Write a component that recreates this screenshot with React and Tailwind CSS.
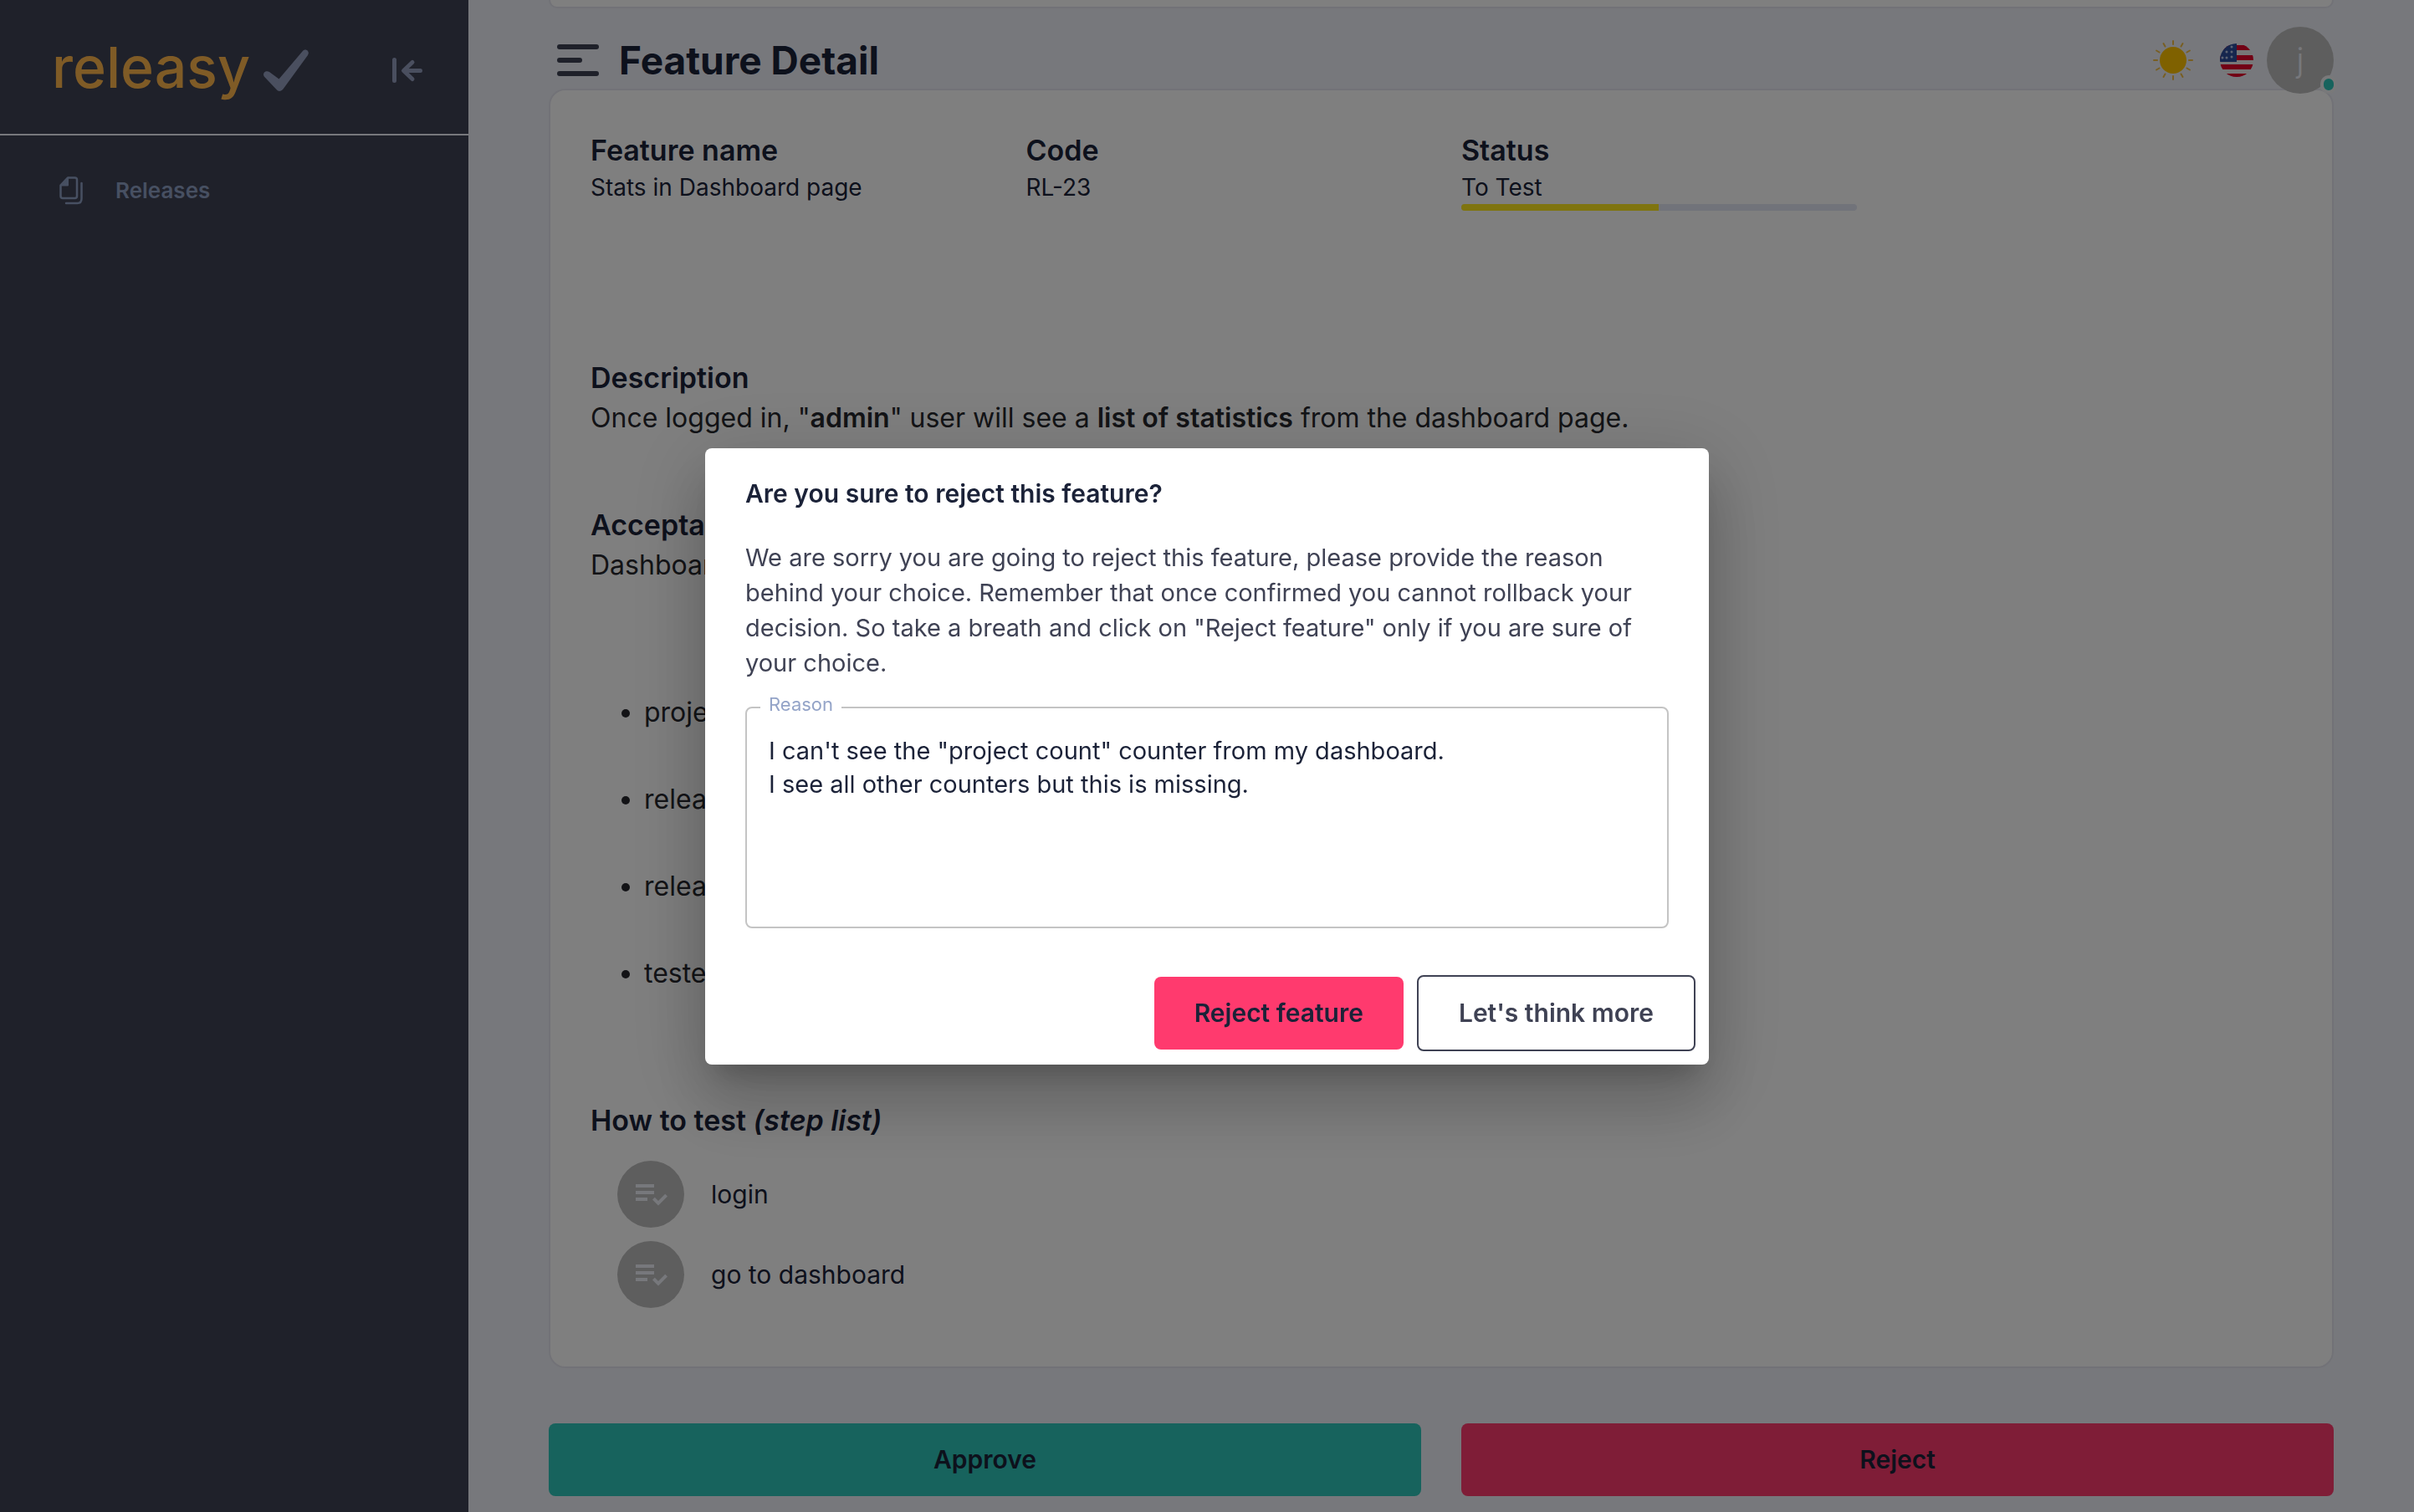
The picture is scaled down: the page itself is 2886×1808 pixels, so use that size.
import React from "react";

const CRITERIA = ["projects count", "releases count", "released features", "tested features"];
const STEPS = ["login", "go to dashboard"];

function LogoCheck() {
  return (
    <svg viewBox="0 0 54 50" className="mt-2 h-[50px] w-[54px] fill-[#949fbf]" aria-hidden="true">
      <path d="M7 27 L18.5 35.500 L46.500 2.500 C48.500 -.2 51.500 0 53 2 C54.200 3.600 54 5.300 53 7 L23.500 47.500 C21 50.600 17.500 50.600 15.500 48 L1.500 33.300 C-.5 31.300 -.3 29 1 27.600 C2.500 25.900 5 25.700 7 27 Z" />
    </svg>
  );
}

function CollapseIcon() {
  return (
    <svg viewBox="0 0 36 30" className="h-[30px] w-9 stroke-[#949fbf]" fill="none" strokeWidth="5" strokeLinecap="round" strokeLinejoin="round" aria-hidden="true">
      <path d="M2.500 2.500V27.500M33.500 15.500H14M24 5.500L13.500 15.500L24 25.500" />
    </svg>
  );
}

function ReleasesIcon() {
  return (
    <svg viewBox="0 0 30 34" className="h-[34px] w-[30px]" fill="none" stroke="#8fa0c4" strokeWidth="2.500" strokeLinecap="round" strokeLinejoin="round" aria-hidden="true">
      <path d="M10 1.500H18.500Q21 1.500 21 4V23.500Q21 26 18.500 26H4Q1.500 26 1.500 23.500V10.500Z" />
      <path d="M10.500 2V11H2Z" fill="#8fa0c4" strokeWidth="1" />
      <path d="M26.500 8V26.500Q26.500 32 21.500 32H8" />
    </svg>
  );
}

function MenuIcon() {
  return (
    <svg viewBox="0 0 50 38" className="h-[38px] w-[50px] fill-[#3f4254]" aria-hidden="true">
      <rect width="50" height="6" rx="3" />
      <rect y="16" width="30" height="6" rx="3" />
      <rect y="32" width="50" height="6" rx="3" />
    </svg>
  );
}

function SunIcon() {
  return (
    <svg viewBox="0 0 48 48" className="size-12" aria-hidden="true">
      <circle cx="24" cy="24" r="16" fill="#ffc200" />
      {[0, 30, 60, 90, 120, 150, 180, 210, 240, 270, 300, 330].map((a) => (
        <rect key={a} x="23" y="0" width="2" height="6" rx="1" fill="#f0bd45" transform={`rotate(${a} 24 24)`} />
      ))}
    </svg>
  );
}

function FlagIcon() {
  return (
    <svg viewBox="0 0 40 40" className="size-10" aria-hidden="true">
      <defs>
        <clipPath id="flag">
          <circle cx="20" cy="20" r="20" />
        </clipPath>
      </defs>
      <g clipPath="url(#flag)">
        <rect width="40" height="40" fill="#eeeeee" />
        {[2, 14, 25, 36].map((y) => (
          <rect key={y} y={y} width="40" height="6" fill="#e4002b" />
        ))}
        <rect width="20" height="22" fill="#2c4c9c" />
        {[[14, 4], [14, 10], [14, 16], [8, 10], [8, 17], [3, 17]].map(([x, y]) => (
          <circle key={`${x}-${y}`} cx={x} cy={y} r="1.500" fill="#b9c5e4" />
        ))}
      </g>
    </svg>
  );
}

function StepIcon() {
  return (
    <span className="flex size-20 items-center justify-center rounded-full bg-[#bdbdbd]">
      <svg viewBox="0 0 24 24" className="size-12 fill-[#eef0f8]" aria-hidden="true">
        <path d="M3 6h11v2H3zM3 10h11v2H3zM3 14h7v2H3zM13 15.300l3.500 3.500 5.500-5.500-1.400-1.400-4.100 4.100-2.100-2.100z" />
      </svg>
    </span>
  );
}

function SectionTitle({ children }) {
  return <h2 className="text-[34px] leading-[48px] font-semibold text-[#1b2238]">{children}</h2>;
}

export default function App() {
  return (
    <div className="flex min-h-screen bg-[#eef0f8] font-['Inter',sans-serif] text-[#1b2238]">
      <aside className="w-[560px] shrink-0 bg-[#3f4254]">
        <div className="flex h-[162px] items-center border-b-2 border-[#eef0f8] pr-[55px] pl-[62px]">
          <a href="#home" className="flex items-center gap-4">
            <span className="text-[68px] leading-[80px] font-medium text-[#ffb74d]">releasy</span>
            <LogoCheck />
          </a>
          <button type="button" aria-label="Collapse sidebar" className="mt-2 ml-auto">
            <CollapseIcon />
          </button>
        </div>
        <nav className="px-[71px] pt-[46px]">
          <a href="#releases" className="flex items-center gap-[37px] text-[26px] leading-10 font-semibold text-[#8fa0c4]">
            <ReleasesIcon />
            Releases
          </a>
        </nav>
      </aside>

      <main className="min-w-0 grow px-24 pb-5">
        <div className="h-[10px] rounded-b-[20px] border-2 border-t-0 border-[#e4e5ef] bg-white" />

        <header className="relative z-10 flex h-24 items-center pt-7 pl-[10px]">
          <button type="button" aria-label="Toggle menu">
            <MenuIcon />
          </button>
          <h1 className="ml-6 text-[46px] leading-[56px] font-bold">Feature Detail</h1>
          <div className="ml-auto flex items-center">
            <button type="button" aria-label="Switch theme">
              <SunIcon />
            </button>
            <button type="button" aria-label="Change language" className="ml-8">
              <FlagIcon />
            </button>
            <button type="button" className="relative ml-4 flex size-20 items-center justify-center rounded-full bg-[#bdbdbd] text-[40px] font-light text-[#eef0f8]">
              j
              <span className="absolute -right-1 bottom-0 h-[22px] w-5 rounded-full border-4 border-[#f2f2f4] bg-[#2ec6ba]" />
            </button>
          </div>
        </header>

        <article className="rounded-[20px] border-2 border-[#e4e5ef] bg-white px-12 pt-12 pb-[70px]">
          <div className="grid grid-cols-4 gap-12">
            <div>
              <SectionTitle>Feature name</SectionTitle>
              <p className="text-[28px] leading-10">Stats in Dashboard page</p>
            </div>
            <div>
              <SectionTitle>Code</SectionTitle>
              <p className="text-[28px] leading-10">RL-23</p>
            </div>
            <div>
              <SectionTitle>Status</SectionTitle>
              <p className="text-[28px] leading-10">To Test</p>
              <div className="h-2 overflow-hidden rounded-sm bg-[#e2e6f4]">
                <div className="h-full w-1/2 bg-[#ffe81e]" />
              </div>
            </div>
          </div>

          <section className="mt-44">
            <SectionTitle>Description</SectionTitle>
            <p className="text-[32px] leading-[48px] text-[#26272d]">
              Once logged in, "<strong className="font-semibold">admin</strong>" user will see a{" "}
              <strong className="font-semibold">list of statistics</strong> from the dashboard page.
            </p>
          </section>

          <section className="mt-20">
            <SectionTitle>Acceptance criteria</SectionTitle>
            <div className="text-[32px] leading-[48px] text-[#26272d]">
              <p>Dashboard page shows</p>
              <ul className="mt-32 list-disc space-y-14 pl-16">
                {CRITERIA.map((item) => (
                  <li key={item}>{item}</li>
                ))}
              </ul>
            </div>
          </section>

          <section className="mt-32">
            <SectionTitle>
              How to test <em>(step list)</em>
            </SectionTitle>
            <ol className="mt-6 space-y-4 pl-8">
              {STEPS.map((step) => (
                <li key={step} className="flex items-center gap-8 text-[30px] leading-[42px]">
                  <StepIcon />
                  {step}
                </li>
              ))}
            </ol>
          </section>
        </article>

        <div className="mt-[66px] grid grid-cols-2 gap-12 text-[30px] leading-[39px] font-semibold">
          <button type="button" className="rounded-lg bg-[#2ec6ba] py-6">Approve</button>
          <button type="button" className="rounded-lg bg-[#ff3a6e] py-6">Reject</button>
        </div>
      </main>

      <div className="fixed inset-0 z-20 flex items-center justify-center bg-black/50">
        <div
          role="dialog"
          aria-modal="true"
          aria-labelledby="dialog-title"
          className="w-full max-w-[1200px] rounded-lg bg-white shadow-[0_22px_30px_-14px_rgba(0,0,0,0.2),0_48px_76px_6px_rgba(0,0,0,0.14),0_18px_92px_16px_rgba(0,0,0,0.12)]"
        >
          <div className="px-12 pt-[30px]">
            <h2 id="dialog-title" className="text-[30px] leading-[48px] font-semibold">
              Are you sure to reject this feature?
            </h2>
            <p className="mt-8 text-[29px] leading-[42px] text-[#3f4254]">
              We are sorry you are going to reject this feature, please provide the reason behind your choice. Remember
              that once confirmed you cannot rollback your decision. So take a breath and click on "Reject feature" only
              if you are sure of your choice.
            </p>
            <fieldset className="mt-4 rounded-lg border-2 border-[#c4c4c4] px-[26px] pt-4 pb-[30px]">
              <legend className="-ml-[10px] px-[10px] pb-2 text-[22px] leading-6 text-[#94a4c8]">
                <label htmlFor="reason">Reason</label>
              </legend>
              <textarea
                id="reason"
                rows={5}
                className="block w-full resize-none text-[29px] leading-10 outline-none"
                defaultValue={'I can\'t see the "project count" counter from my dashboard.\nI see all other counters but this is missing.'}
              />
            </fieldset>
          </div>
          <div className="mt-14 flex items-center justify-end gap-4 px-4 pb-4 text-[30px] leading-[39px] font-semibold">
            <button type="button" className="rounded-lg bg-[#ff3a6e] px-12 py-6">Reject feature</button>
            <button type="button" className="rounded-lg border-2 border-[#3f4254] px-12 py-6 text-[#3f4254]">
              Let's think more
            </button>
          </div>
        </div>
      </div>
    </div>
  );
}
